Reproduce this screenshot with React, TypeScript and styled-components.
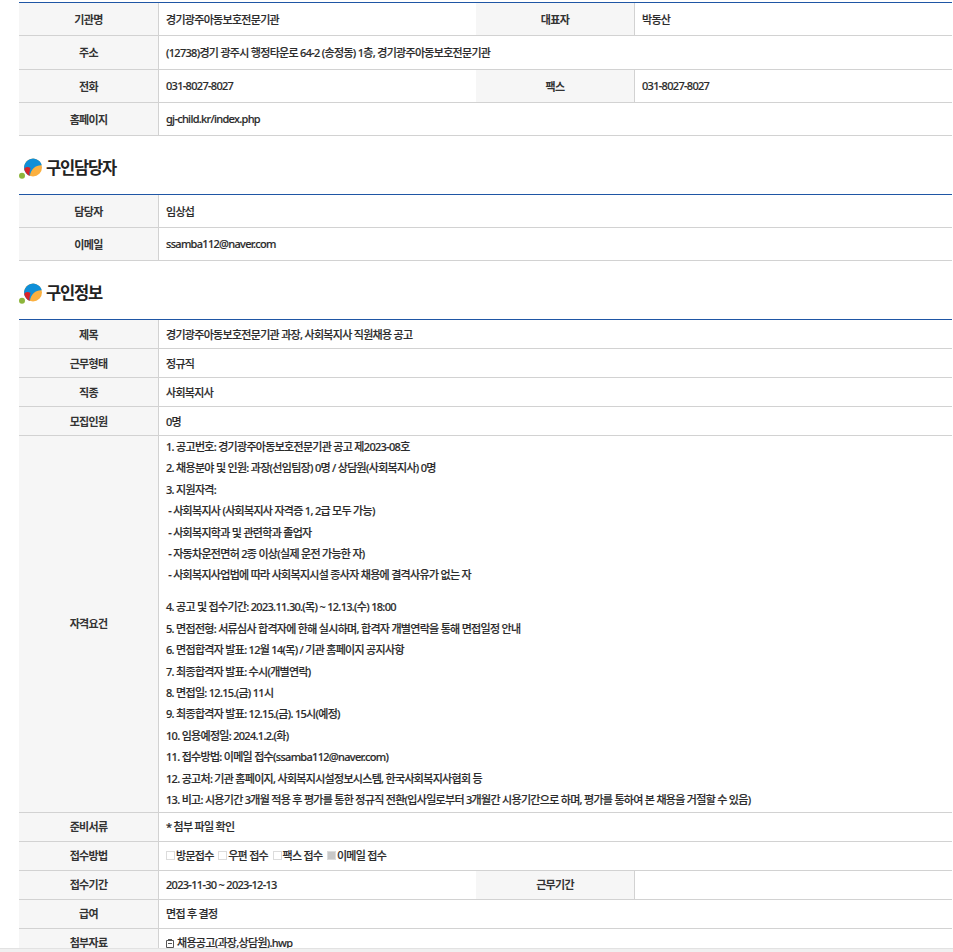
import React from "react";
import styled, { createGlobalStyle } from "styled-components";

const Global = createGlobalStyle`
  html, body { margin: 0; padding: 0; height: 100%; overflow: hidden; background: #fff; }
  body { font-family: "Noto Sans", "Noto Sans CJK KR", sans-serif; color: #333; }
`;
const Page = styled.div`
  height: 952px;
  display: flex;
  flex-direction: column;
`;
const Scroll = styled.div`
  flex: 1;
  min-height: 0;
  overflow: hidden;
  padding: 2px 1px 0 19px;
`;
const BottomBar = styled.div`
  height: 4px;
  background: #f0f0f0;
  border-top: 1px solid #e2e2e2;
  box-sizing: border-box;
`;
const Table = styled.table`
  width: 933px;
  table-layout: fixed;
  border-collapse: separate;
  border-spacing: 0;
  border-top: 1px solid #1f56a5;
`;
const Row = styled.tr<{ $h: number }>`
  height: ${p => p.$h}px;
`;
const Head = styled.th`
  box-sizing: border-box;
  background: #f6f6f6;
  border-bottom: 1px solid #d2d2d2;
  border-right: 1px solid #d2d2d2;
  font-size: 11px;
  font-weight: 700;
  letter-spacing: -0.7px;
  color: #333;
  padding: 0 0 1px;
  text-align: center;
`;
const Cell = styled.td`
  box-sizing: border-box;
  border-bottom: 1px solid #d2d2d2;
  font-size: 11px;
  font-weight: 500;
  letter-spacing: -0.7px;
  color: #2b2b2b;
  -webkit-text-stroke: 0.15px #2b2b2b;
  padding: 0 0 1px 7px;
  text-align: left;
`;
const Heading = styled.h2<{ $top: number; $bottom: number }>`
  display: flex;
  align-items: center;
  gap: 3px;
  height: 24px;
  margin: ${p => p.$top}px 0 ${p => p.$bottom}px;
  font-size: 16.5px;
  font-weight: 700;
  letter-spacing: -1.2px;
  color: #222;
`;
const HeadingText = styled.span`
  margin-top: -3px;
`;
const Line = styled.div`
  line-height: 21.4px;
  white-space: nowrap;
`;
const Spacer = styled.div`
  height: 10.6px;
`;
const Options = styled.div`
  display: flex;
  gap: 4.5px;
`;
const Option = styled.label`
  display: inline-flex;
  align-items: center;
`;
const Check = styled.span<{ $on?: boolean }>`
  width: 7px;
  height: 7px;
  border: 1px solid #dcdcdc;
  background: ${p => (p.$on ? "#c8c8c8" : "#fff")};
  margin-right: 1px;
`;
const FileIcon = styled.svg`
  margin-right: 3px;
  vertical-align: -1px;
`;

const Logo = () => (
  <svg width="24" height="24" viewBox="0 0 24 24">
    <circle cx="3" cy="19.7" r="3" fill="#8db53c" />
    <circle cx="14" cy="11.5" r="9" fill="#fbb040" />
    <path d="M9 19 A9 9 0 1 1 22.8 9.4 C17 9 12 13 11 19.5 Z" fill="#0f8fd8" />
    <path d="M5.3 13 C6 16 8 18.6 10.5 20 C10.2 17.5 10.8 14.5 11.5 12 C9 10.2 6 10.7 5.3 13 Z" fill="#d8232a" />
  </svg>
);

const lines = [
  "1. 공고번호: 경기광주아동보호전문기관 공고 제2023-08호",
  "2. 채용분야 및 인원: 과장(선임팀장) 0명 / 상담원(사회복지사) 0명",
  "3. 지원자격:",
  " - 사회복지사 (사회복지사 자격증 1, 2급 모두 가능)",
  " - 사회복지학과 및 관련학과 졸업자",
  " - 자동차운전면허 2종 이상(실제 운전 가능한 자)",
  " - 사회복지사업법에 따라 사회복지시설 종사자 채용에 결격사유가 없는 자",
  "",
  "4. 공고 및 접수기간: 2023.11.30.(목) ~ 12.13.(수) 18:00",
  "5. 면접전형: 서류심사 합격자에 한해 실시하며, 합격자 개별연락을 통해 면접일정 안내",
  "6. 면접합격자 발표: 12월 14(목) / 기관 홈페이지 공지사항",
  "7. 최종합격자 발표: 수시(개별연락)",
  "8. 면접일: 12.15.(금) 11시",
  "9. 최종합격자 발표: 12.15.(금). 15시(예정)",
  "10. 임용예정일: 2024.1.2.(화)",
  "11. 접수방법: 이메일 접수(ssamba112@naver.com)",
  "12. 공고처: 기관 홈페이지, 사회복지시설정보시스템, 한국사회복지사협회 등",
  "13. 비고: 시용기간 3개월 적용 후 평가를 통한 정규직 전환(입사일로부터 3개월간 시용기간으로 하며, 평가를 통하여 본 채용을 거절할 수 있음)",
];

const Cols = () => (
  <colgroup>
    <col width="140" />
    <col width="317" />
    <col width="159" />
    <col width="317" />
  </colgroup>
);

export default function App() {
  return (
    <Page>
      <Global />
      <Scroll>
        <Table>
          <Cols />
          <tbody>
            <Row $h={33}><Head>기관명</Head><Cell>경기광주아동보호전문기관</Cell><Head>대표자</Head><Cell>박동산</Cell></Row>
            <Row $h={34}><Head>주소</Head><Cell colSpan={3}>(12738)경기 광주시 행정타운로 64-2 (송정동) 1층, 경기광주아동보호전문기관</Cell></Row>
            <Row $h={33}><Head>전화</Head><Cell>031-8027-8027</Cell><Head>팩스</Head><Cell>031-8027-8027</Cell></Row>
            <Row $h={33}><Head>홈페이지</Head><Cell colSpan={3}>gj-child.kr/index.php</Cell></Row>
          </tbody>
        </Table>
        <Heading $top={20} $bottom={14}><Logo /><HeadingText>구인담당자</HeadingText></Heading>
        <Table>
          <Cols />
          <tbody>
            <Row $h={33}><Head>담당자</Head><Cell colSpan={3}>임상섭</Cell></Row>
            <Row $h={33}><Head>이메일</Head><Cell colSpan={3}>ssamba112@naver.com</Cell></Row>
          </tbody>
        </Table>
        <Heading $top={20} $bottom={14}><Logo /><HeadingText>구인정보</HeadingText></Heading>
        <Table>
          <Cols />
          <tbody>
            <Row $h={29}><Head>제목</Head><Cell colSpan={3}>경기광주아동보호전문기관 과장, 사회복지사 직원채용 공고</Cell></Row>
            <Row $h={29}><Head>근무형태</Head><Cell colSpan={3}>정규직</Cell></Row>
            <Row $h={29}><Head>직종</Head><Cell colSpan={3}>사회복지사</Cell></Row>
            <Row $h={29}><Head>모집인원</Head><Cell colSpan={3}>0명</Cell></Row>
            <Row $h={376}>
              <Head>자격요건</Head>
              <Cell colSpan={3}>
                {lines.map((l, i) => (l ? <Line key={i}>{l.startsWith(" ") ? <>&nbsp;{l.trim()}</> : l}</Line> : <Spacer key={i} />))}
              </Cell>
            </Row>
            <Row $h={29}><Head>준비서류</Head><Cell colSpan={3}>* 첨부 파일 확인</Cell></Row>
            <Row $h={29}>
              <Head>접수방법</Head>
              <Cell colSpan={3}>
                <Options>
                  <Option><Check />방문접수</Option>
                  <Option><Check />우편 접수</Option>
                  <Option><Check />팩스 접수</Option>
                  <Option><Check $on />이메일 접수</Option>
                </Options>
              </Cell>
            </Row>
            <Row $h={29}><Head>접수기간</Head><Cell>2023-11-30 ~ 2023-12-13</Cell><Head>근무기간</Head><Cell /></Row>
            <Row $h={29}><Head>급여</Head><Cell colSpan={3}>면접 후 결정</Cell></Row>
            <Row $h={29}>
              <Head>첨부자료</Head>
              <Cell colSpan={3}>
                <FileIcon width="8" height="9" viewBox="0 0 8 9">
                  <path d="M0.5 1.5h7v7h-7z M2 0.5h4 M2 4.5h4" fill="none" stroke="#555" strokeWidth="1" />
                </FileIcon>
                채용공고(과장,상담원).hwp
              </Cell>
            </Row>
          </tbody>
        </Table>
      </Scroll>
      <BottomBar />
    </Page>
  );
}
